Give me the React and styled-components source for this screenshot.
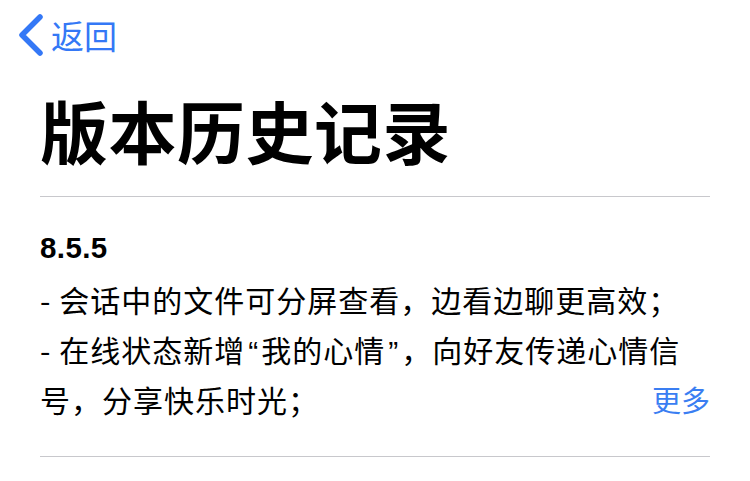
import styled, { createGlobalStyle } from 'styled-components'

const Global = createGlobalStyle`
  html, body {
    margin: 0;
    padding: 0;
    background: #ffffff;
  }
  body {
    font-family: "Noto Sans CJK SC", "Noto Sans", sans-serif;
    color: #000;
  }
`

const Pagina = styled.div`
  width: 750px;
  height: 481px;
  overflow: hidden;
  background: #fff;
`
const BarraTopo = styled.div`
  display: flex;
  align-items: center;
  height: 70px;
  padding-left: 16px;
`
const BotaoVoltar = styled.button`
  display: flex;
  align-items: center;
  gap: 7px;
  border: 0;
  background: none;
  padding: 0;
  color: #3478f6;
  font-family: "Noto Sans CJK SC", sans-serif;
  font-size: 33px;
  line-height: 40px;
  cursor: pointer;
`
const Conteudo = styled.div`
  padding: 0 40px;
`
const Titulo = styled.h1`
  margin: 20px 0 0 0;
  font-size: 68px;
  line-height: 80px;
  font-weight: 700;
  letter-spacing: 0.5px;
`
const Divisor = styled.div`
  height: 1px;
  background: #c8c8cc;
  margin-top: ${p => p.$topo}px;
`
const Versao = styled.div`
  position: relative;
  margin-top: 33px;
`
const NumeroVersao = styled.div`
  font-family: "Liberation Sans", Arial, sans-serif;
  font-weight: 700;
  font-size: 29.5px;
  line-height: 36px;
  letter-spacing: 0.4px;
`
const Notas = styled.p`
  margin: 8px 0 0 0;
  padding-right: 10px;
  font-size: 30px;
  line-height: 50px;
  letter-spacing: 1px;
  color: #000;
`
const Aspas = styled.span`
  font-family: "Liberation Sans", Arial, sans-serif;
  line-height: 1;
  letter-spacing: 0;
  margin: 0 3px;
`
const Mais = styled.a`
  position: absolute;
  right: 0;
  bottom: 0;
  font-size: 29px;
  line-height: 50px;
  color: #3a7ef2;
  text-decoration: none;
  cursor: pointer;
`

function Chevron() {
  return (
    <svg width="28" height="44" viewBox="0 0 28 44">
      <polyline
        points="24,4 6,22 24,40"
        fill="none"
        stroke="#3478f6"
        strokeWidth="5.5"
        strokeLinecap="round"
        strokeLinejoin="round"
      />
    </svg>
  )
}

export default function App() {
  return (
    <Pagina>
      <Global />
      <BarraTopo>
        <BotaoVoltar>
          <Chevron />
          返回
        </BotaoVoltar>
      </BarraTopo>
      <Conteudo>
        <Titulo>版本历史记录</Titulo>
        <Divisor $topo={26} />
        <Versao>
          <NumeroVersao>8.5.5</NumeroVersao>
          <Notas>
            - 会话中的文件可分屏查看，边看边聊更高效；<br />
            - 在线状态新增<Aspas>“</Aspas>我的心情<Aspas>”</Aspas>，向好友传递心情信号，分享快乐时光；
          </Notas>
          <Mais>更多</Mais>
        </Versao>
        <Divisor $topo={32} />
      </Conteudo>
    </Pagina>
  )
}
